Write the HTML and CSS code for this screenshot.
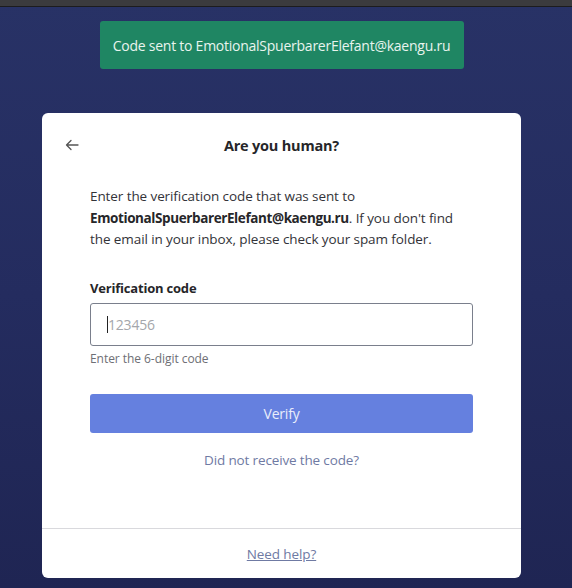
FILE: index.html
```html
<!DOCTYPE html>
<html lang="en">
<head>
<meta charset="utf-8">
<title>Are you human?</title>
<link rel="stylesheet" href="styles.css">
</head>
<body>
<div class="topbar"></div>
<main class="page">
  <div class="toast">Code sent to EmotionalSpuerbarerElefant@kaengu.ru</div>
  <section class="card">
    <header class="card-head">
      <button class="back" aria-label="Back">
        <svg width="16" height="16" viewBox="0 0 16 16" fill="none" stroke="#555" stroke-width="1.3" stroke-linecap="round" stroke-linejoin="round"><path d="M14 8H2.5M7 3.5L2.5 8L7 12.5"/></svg>
      </button>
      <h1 class="title">Are you human?</h1>
    </header>
    <div class="card-body">
      <p class="intro">Enter the verification code that was sent to <strong>EmotionalSpuerbarerElefant@kaengu.ru</strong>. If you don't find the email in your inbox, please check your spam folder.</p>
      <label class="label" for="code">Verification code</label>
      <div class="input"><span class="caret"></span><span class="placeholder">123456</span></div>
      <div class="hint">Enter the 6-digit code</div>
      <button class="verify">Verify</button>
      <a class="resend">Did not receive the code?</a>
    </div>
    <footer class="card-foot">
      <a class="help">Need help?</a>
    </footer>
  </section>
</main>
</body>
</html>
```
FILE: styles.css
```css
html, body {
  margin: 0;
  padding: 0;
}
body {
  width: 572px;
  height: 588px;
  overflow: hidden;
  background: linear-gradient(180deg, #283266 0%, #242c5f 50%, #1f2553 100%);
  font-family: "Open Sans", "Noto Sans", sans-serif;
  color: #2a2a2e;
}
.topbar {
  height: 6px;
  background: #3b3b3e;
  border-bottom: 1px solid #1c1c1e;
}
.page {
  display: flex;
  flex-direction: column;
  align-items: center;
  padding-right: 9px;
}
.toast {
  margin-top: 14px;
  width: 364px;
  height: 48px;
  box-sizing: border-box;
  background: #1f8663;
  border-radius: 3px;
  color: #e8f4ee;
  font-size: 14px;
  letter-spacing: -0.25px;
  display: flex;
  align-items: center;
  justify-content: center;
}
.card {
  margin-top: 44px;
  width: 479px;
  height: 465px;
  background: #fff;
  border-radius: 6px;
  display: flex;
  flex-direction: column;
}
.card-head {
  height: 64px;
  position: relative;
  display: flex;
  align-items: center;
  justify-content: center;
}
.back {
  position: absolute;
  left: 22px;
  top: 24px;
  width: 16px;
  height: 16px;
  padding: 0;
  border: 0;
  background: none;
  display: flex;
}
.title {
  margin: 0;
  font-size: 14.5px;
  font-weight: 700;
  letter-spacing: -0.2px;
  color: #262629;
}
.card-body {
  padding: 0 48px;
  display: flex;
  flex-direction: column;
  flex: 1;
}
.intro {
  margin: 9px 0 0;
  font-size: 13.5px;
  line-height: 21.5px;
  letter-spacing: -0.09px;
  color: #333338;
}
.intro strong {
  font-weight: 700;
  letter-spacing: -0.4px;
  color: #262629;
}
.label {
  margin-top: 27px;
  font-size: 13px;
  line-height: 20px;
  font-weight: 700;
  letter-spacing: -0.2px;
  color: #262629;
}
.input {
  margin-top: 5px;
  height: 43px;
  box-sizing: border-box;
  border: 1px solid #7a7f8c;
  border-radius: 3px;
  display: flex;
  align-items: center;
  padding-left: 16px;
}
.caret {
  width: 1px;
  height: 17px;
  background: #222;
}
.placeholder {
  font-size: 14px;
  color: #a4a6ab;
  letter-spacing: -0.2px;
}
.hint {
  margin-top: 5px;
  font-size: 12px;
  line-height: 16px;
  color: #6e6f75;
  letter-spacing: -0.05px;
}
.verify {
  margin-top: 27px;
  height: 39px;
  border: 0;
  border-radius: 3px;
  background: #6580df;
  color: #e9edfb;
  font-family: inherit;
  font-size: 14px;
  letter-spacing: -0.2px;
}
.resend {
  margin-top: 17px;
  text-align: center;
  font-size: 13.5px;
  line-height: 20px;
  color: #6f7aa3;
  letter-spacing: -0.15px;
}
.card-foot {
  height: 49px;
  border-top: 1px solid #d9d9dd;
  display: flex;
  align-items: center;
  justify-content: center;
}
.help {
  font-size: 13.5px;
  color: #6f7aa3;
  text-decoration: underline;
  letter-spacing: -0.1px;
}
```
